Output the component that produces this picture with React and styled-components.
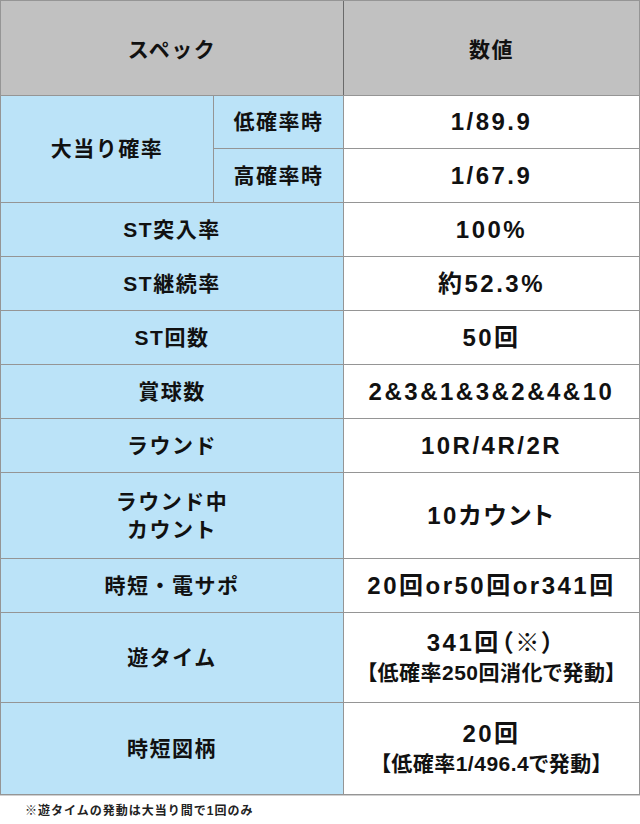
import React from "react";
import styled, { createGlobalStyle } from "styled-components";

const Global = createGlobalStyle`
  body {
    margin: 0;
    background: #fff;
    font-family: "Liberation Sans", "Noto Sans CJK JP", sans-serif;
    color: #111;
  }
`;

export default function App() {
  const rows = [
    { label: "ST突入率", value: ["100%"] },
    { label: "ST継続率", value: ["約52.3%"] },
    { label: "ST回数", value: ["50回"] },
    { label: "賞球数", value: ["2&3&1&3&2&4&10"] },
    { label: "ラウンド", value: ["10R/4R/2R"] },
    { label: ["ラウンド中", "カウント"], value: ["10カウント"] },
    { label: "時短・電サポ", value: ["20回or50回or341回"] },
    { label: "遊タイム", value: ["341回（※）", "【低確率250回消化で発動】"], small: true },
    { label: "時短図柄", value: ["20回", "【低確率1/496.4で発動】"], small: true },
  ];

  return (
    <>
      <Global />
      <Table>
        <Head $span="1 / 3" $divider>スペック</Head>
        <Head $span="3 / 4">数値</Head>

        <Label $span="1 / 2" $rows="2 / 4">大当り確率</Label>
        <Label $span="2 / 3">低確率時</Label>
        <Value>1/89.9</Value>
        <Label $span="2 / 3">高確率時</Label>
        <Value>1/67.9</Value>

        {rows.map(({ label, value, small }) => (
          <React.Fragment key={value[0]}>
            <Label $span="1 / 3">
              {Array.isArray(label)
                ? label.map((l) => <Line key={l}>{l}</Line>)
                : label}
            </Label>
            <Value>
              {value.map((v, i) => (
                <Line key={v} $small={small && i > 0}>
                  {v}
                </Line>
              ))}
            </Value>
          </React.Fragment>
        ))}
      </Table>
      <Note>※遊タイムの発動は大当り間で1回のみ</Note>
    </>
  );
}

const Table = styled.div`
  display: grid;
  grid-template-columns: 212px 129px 295px;
  grid-template-rows: 94px 52px 53px 53px 53px 53px 53px 53px 85px 53px 89px 91px;
  gap: 1px;
  padding: 1px;
  background: #959595;
  width: 640px;
  box-sizing: border-box;
  border-bottom: 1px solid #d0d0d0;
`;

const Cell = styled.div`
  display: flex;
  flex-direction: column;
  align-items: center;
  justify-content: center;
  text-align: center;
  font-weight: 700;
`;

const Head = styled(Cell)`
  grid-column: ${(p) => p.$span};
  background: #c1c1c1;
  font-size: 21px;
  letter-spacing: 1.5px;
  box-shadow: ${(p) => (p.$divider ? "1px 0 0 #6a6a6a" : "none")};
`;

const Label = styled(Cell)`
  grid-column: ${(p) => p.$span};
  grid-row: ${(p) => p.$rows || "auto"};
  background: #bbe3f8;
  font-size: 21px;
  letter-spacing: 1.5px;
  line-height: 28px;
`;

const Value = styled(Cell)`
  grid-column: 3 / 4;
  background: #fff;
  font-size: 24px;
  letter-spacing: 2.5px;
  line-height: 30px;
  font-feature-settings: "palt";
`;

const Line = styled.div`
  font-size: ${(p) => (p.$small ? "21px" : "inherit")};
  letter-spacing: ${(p) => (p.$small ? "0.5px" : "inherit")};
`;

const Note = styled.div`
  padding: 5px 0 0 25px;
  font-size: 12px;
  font-weight: 700;
  letter-spacing: 1px;
  color: #222;
`;
